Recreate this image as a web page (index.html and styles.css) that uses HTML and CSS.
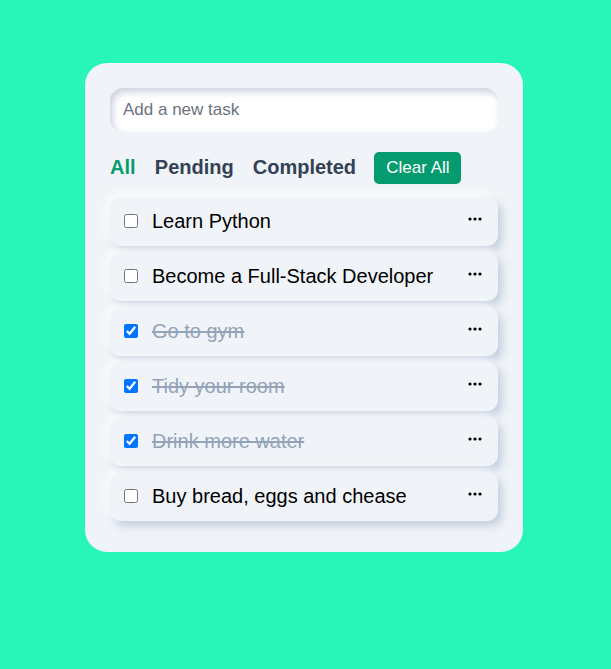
FILE: index.html
```html
<!DOCTYPE html>
<html>
<head>
<meta charset="utf-8">
<link rel="stylesheet" href="styles.css">
</head>
<body>
<div class="card">
  <input class="new-task" type="text" placeholder="Add a new task">
  <div class="filters">
    <span class="filter active">All</span>
    <span class="filter">Pending</span>
    <span class="filter">Completed</span>
    <button class="clear">Clear All</button>
  </div>
  <ul class="tasks">
    <li class="task"><input type="checkbox"><span class="label">Learn Python</span><span class="more"><svg width="14" height="4" viewBox="0 0 14 4"><circle cx="2" cy="2" r="1.6"/><circle cx="7" cy="2" r="1.6"/><circle cx="12" cy="2" r="1.6"/></svg></span></li>
    <li class="task"><input type="checkbox"><span class="label">Become a Full-Stack Developer</span><span class="more"><svg width="14" height="4" viewBox="0 0 14 4"><circle cx="2" cy="2" r="1.6"/><circle cx="7" cy="2" r="1.6"/><circle cx="12" cy="2" r="1.6"/></svg></span></li>
    <li class="task done"><input type="checkbox" checked><span class="label">Go to gym</span><span class="more"><svg width="14" height="4" viewBox="0 0 14 4"><circle cx="2" cy="2" r="1.6"/><circle cx="7" cy="2" r="1.6"/><circle cx="12" cy="2" r="1.6"/></svg></span></li>
    <li class="task done"><input type="checkbox" checked><span class="label">Tidy your room</span><span class="more"><svg width="14" height="4" viewBox="0 0 14 4"><circle cx="2" cy="2" r="1.6"/><circle cx="7" cy="2" r="1.6"/><circle cx="12" cy="2" r="1.6"/></svg></span></li>
    <li class="task done"><input type="checkbox" checked><span class="label">Drink more water</span><span class="more"><svg width="14" height="4" viewBox="0 0 14 4"><circle cx="2" cy="2" r="1.6"/><circle cx="7" cy="2" r="1.6"/><circle cx="12" cy="2" r="1.6"/></svg></span></li>
    <li class="task"><input type="checkbox"><span class="label">Buy bread, eggs and chease</span><span class="more"><svg width="14" height="4" viewBox="0 0 14 4"><circle cx="2" cy="2" r="1.6"/><circle cx="7" cy="2" r="1.6"/><circle cx="12" cy="2" r="1.6"/></svg></span></li>
  </ul>
</div>
</body>
</html>
```
FILE: styles.css
```css
html, body {
  margin: 0;
  padding: 0;
}
body {
  background: #28f5b8;
  font-family: "Liberation Sans", Arial, sans-serif;
  min-height: 669px;
  padding-top: 63px;
  box-sizing: border-box;
}
.card {
  width: 438px;
  margin-left: 85px;
  box-sizing: border-box;
  background: #f0f4f8;
  border-radius: 22px;
  padding: 25px 25px 31px 25px;
}
.new-task {
  display: block;
  width: 100%;
  height: 44px;
  box-sizing: border-box;
  border: none;
  outline: none;
  border-radius: 13px;
  background: #ffffff;
  padding: 0 13px;
  font-family: "Liberation Sans", Arial, sans-serif;
  font-size: 17px;
  color: #333;
  box-shadow: inset 3px 4px 7px rgba(160, 172, 196, 0.55), inset -2px -2px 5px rgba(255,255,255,0.9);
}
.new-task::placeholder {
  color: #6b7280;
}
.filters {
  display: flex;
  align-items: center;
  margin-top: 19px;
  height: 33px;
}
.filter {
  font-size: 20px;
  font-weight: bold;
  color: #334155;
  margin-right: 19px;
}
.filter.active {
  color: #079b6f;
  margin-right: 19.3px;
}
.filter:nth-child(3) {
  margin-right: 18.3px;
}
.clear {
  height: 32px;
  width: 87px;
  border: none;
  border-radius: 5px;
  background: #069b6e;
  color: #ffffff;
  font-family: "Liberation Sans", Arial, sans-serif;
  font-size: 17px;
  padding: 0;
}
.tasks {
  list-style: none;
  margin: 13px 0 0 0;
  padding: 0;
  display: flex;
  flex-direction: column;
  gap: 6.5px;
}
.task {
  display: flex;
  align-items: center;
  height: 48.5px;
  padding: 0 16px 0 9px;
  background: #f0f4f8;
  border-radius: 11px;
  box-shadow: 4px 5px 9px rgba(180, 192, 214, 0.75), -3px -3px 8px rgba(255,255,255,0.9);
}
.task input {
  width: 14px;
  height: 14px;
  margin: 0 14px 0 5px;
}
.label {
  flex: 1;
  font-size: 20px;
  color: #000;
}
.done .label {
  color: #94a3b8;
  text-decoration: line-through;
}
.more {
  display: flex;
  align-items: center;
  margin-top: -4px;
}
.more svg {
  fill: #000;
}
```
